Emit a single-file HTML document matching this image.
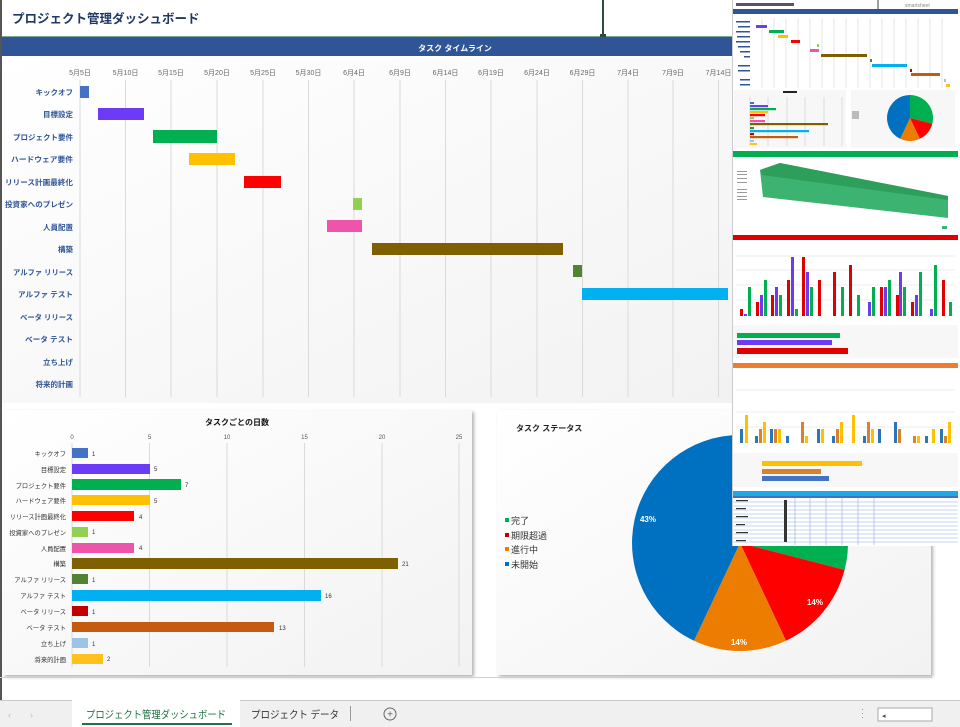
<!DOCTYPE html>
<html><head><meta charset="utf-8">
<style>
html,body{margin:0;padding:0;width:960px;height:727px;overflow:hidden;background:#fff;}
svg{display:block;font-family:"Liberation Sans","Noto Sans CJK JP",sans-serif;}
</style></head><body>
<svg width="960" height="727" viewBox="0 0 960 727" xmlns="http://www.w3.org/2000/svg">
<defs>
<linearGradient id="bg" x1="0" y1="0" x2="1" y2="1"><stop offset="0" stop-color="#ffffff"/><stop offset="1" stop-color="#f2f2f2"/></linearGradient>
<filter id="sh" x="-5%" y="-5%" width="110%" height="110%"><feDropShadow dx="2" dy="2" stdDeviation="1.5" flood-color="#000" flood-opacity="0.3"/></filter>
</defs>
<rect width="960" height="727" fill="#fff"/>
<rect x="0" y="0" width="2" height="700" fill="#555"/>
<text x="12" y="23" font-size="12.5" font-weight="bold" fill="#1F3864">プロジェクト管理ダッシュボード</text>
<rect x="2" y="36" width="731" height="1" fill="#7fa89a"/>
<rect x="602" y="0" width="2" height="37" fill="#2e4a3a"/>
<rect x="600" y="34" width="6" height="4" fill="#2e4a3a"/>
<rect x="2" y="37" width="731" height="19" fill="#2F5597"/>
<text x="455" y="51" font-size="8" font-weight="bold" fill="#fff" text-anchor="middle">タスク タイムライン</text>
<rect x="2" y="58" width="731" height="345" fill="url(#bg)"/>
<g stroke="#dadada" stroke-width="1">
<line x1="80" y1="80" x2="80" y2="397"/><line x1="125.5" y1="80" x2="125.5" y2="397"/><line x1="171" y1="80" x2="171" y2="397"/><line x1="217" y1="80" x2="217" y2="397"/><line x1="263" y1="80" x2="263" y2="397"/><line x1="308.5" y1="80" x2="308.5" y2="397"/><line x1="354" y1="80" x2="354" y2="397"/><line x1="400" y1="80" x2="400" y2="397"/><line x1="445.5" y1="80" x2="445.5" y2="397"/><line x1="491" y1="80" x2="491" y2="397"/><line x1="537" y1="80" x2="537" y2="397"/><line x1="582.5" y1="80" x2="582.5" y2="397"/><line x1="628" y1="80" x2="628" y2="397"/><line x1="673" y1="80" x2="673" y2="397"/><line x1="718.5" y1="80" x2="718.5" y2="397"/>
</g>
<g font-size="7" fill="#666" text-anchor="middle">
<text x="80" y="75">5月5日</text><text x="125.5" y="75">5月10日</text><text x="171" y="75">5月15日</text><text x="217" y="75">5月20日</text><text x="263" y="75">5月25日</text><text x="308.5" y="75">5月30日</text><text x="354" y="75">6月4日</text><text x="400" y="75">6月9日</text><text x="445.5" y="75">6月14日</text><text x="491" y="75">6月19日</text><text x="537" y="75">6月24日</text><text x="582.5" y="75">6月29日</text><text x="628" y="75">7月4日</text><text x="673" y="75">7月9日</text><text x="718.5" y="75">7月14日</text>
</g>
<g font-size="7.5" font-weight="bold" fill="#2F5597" text-anchor="end">
<text x="73" y="95">キックオフ</text><text x="73" y="117">目標設定</text><text x="73" y="140" textLength="60" lengthAdjust="spacingAndGlyphs">プロジェクト要件</text><text x="73" y="162" textLength="62" lengthAdjust="spacingAndGlyphs">ハードウェア要件</text><text x="73" y="185" textLength="68" lengthAdjust="spacingAndGlyphs">リリース計画最終化</text><text x="73" y="207" textLength="68" lengthAdjust="spacingAndGlyphs">投資家へのプレゼン</text><text x="73" y="230">人員配置</text><text x="73" y="252">構築</text><text x="73" y="275" textLength="60" lengthAdjust="spacingAndGlyphs">アルファ リリース</text><text x="73" y="297" textLength="55" lengthAdjust="spacingAndGlyphs">アルファ テスト</text><text x="73" y="320" textLength="53" lengthAdjust="spacingAndGlyphs">ベータ リリース</text><text x="73" y="342" textLength="48" lengthAdjust="spacingAndGlyphs">ベータ テスト</text><text x="73" y="365">立ち上げ</text><text x="73" y="387">将来的計画</text>
</g>
<rect x="80" y="86" width="9" height="12" fill="#4472C4"/>
<rect x="98" y="108" width="46" height="12" fill="#6B3BF5"/>
<rect x="153" y="130" width="64" height="13" fill="#00B050"/>
<rect x="189" y="153" width="46" height="12" fill="#FFC000"/>
<rect x="244" y="176" width="37" height="12" fill="#FF0000"/>
<rect x="353" y="198" width="9" height="12" fill="#92D050"/>
<rect x="327" y="220" width="35" height="12" fill="#EE55AA"/>
<rect x="372" y="243" width="191" height="12" fill="#7F6000"/>
<rect x="573" y="265" width="9" height="12" fill="#548235"/>
<rect x="582" y="288" width="146" height="12" fill="#00B0F0"/>

<rect x="3" y="410" width="469" height="265" fill="url(#bg)" filter="url(#sh)"/>
<text x="237" y="425" font-size="8" font-weight="bold" fill="#111" text-anchor="middle">タスクごとの日数</text>
<g stroke="#dadada"><line x1="72" y1="443" x2="72" y2="667"/><line x1="149.5" y1="443" x2="149.5" y2="667"/><line x1="227" y1="443" x2="227" y2="667"/><line x1="304.5" y1="443" x2="304.5" y2="667"/><line x1="382" y1="443" x2="382" y2="667"/><line x1="459" y1="443" x2="459" y2="667"/></g>
<g font-size="6" fill="#555" text-anchor="middle"><text x="72" y="439">0</text><text x="149.5" y="439">5</text><text x="227" y="439">10</text><text x="304.5" y="439">15</text><text x="382" y="439">20</text><text x="459" y="439">25</text></g>
<g font-size="6.3" fill="#333" text-anchor="end">
<text x="66" y="456">キックオフ</text><text x="66" y="472">目標設定</text><text x="66" y="488">プロジェクト要件</text><text x="66" y="503">ハードウェア要件</text><text x="66" y="519">リリース計画最終化</text><text x="66" y="535">投資家へのプレゼン</text><text x="66" y="551">人員配置</text><text x="66" y="566">構築</text><text x="66" y="582">アルファ リリース</text><text x="66" y="598">アルファ テスト</text><text x="66" y="614">ベータ リリース</text><text x="66" y="630">ベータ テスト</text><text x="66" y="646">立ち上げ</text><text x="66" y="662">将来的計画</text>
</g>
<rect x="72" y="448" width="16" height="10" fill="#4472C4"/>
<rect x="72" y="464" width="78" height="10" fill="#6B3BF5"/>
<rect x="72" y="479" width="109" height="11" fill="#00B050"/>
<rect x="72" y="495" width="78" height="10" fill="#FFC000"/>
<rect x="72" y="511" width="62" height="10" fill="#FF0000"/>
<rect x="72" y="527" width="16" height="10" fill="#92D050"/>
<rect x="72" y="543" width="62" height="10" fill="#EE55AA"/>
<rect x="72" y="558" width="326" height="11" fill="#7F6000"/>
<rect x="72" y="574" width="16" height="10" fill="#548235"/>
<rect x="72" y="590" width="249" height="11" fill="#00B0F0"/>
<rect x="72" y="606" width="16" height="10" fill="#C00000"/>
<rect x="72" y="622" width="202" height="10" fill="#C55A11"/>
<rect x="72" y="638" width="16" height="10" fill="#9DC3E6"/>
<rect x="72" y="654" width="31" height="10" fill="#FFC020"/>
<g font-size="6" fill="#333"><text x="92" y="456">1</text><text x="154" y="471">5</text><text x="185" y="487">7</text><text x="154" y="503">5</text><text x="139" y="519">4</text><text x="92" y="534">1</text><text x="139" y="550">4</text><text x="402" y="566">21</text><text x="92" y="582">1</text><text x="325" y="598">16</text><text x="92" y="614">1</text><text x="279" y="630">13</text><text x="92" y="646">1</text><text x="107" y="661">2</text></g>

<rect x="497" y="410" width="434" height="265" fill="url(#bg)" filter="url(#sh)"/>
<text x="516" y="431" font-size="8" font-weight="bold" fill="#222">タスク ステータス</text>
<path d="M740,543 L740,435 A108,108 0 0 1 844.6,569.9 Z" fill="#00B050"/>
<path d="M740,543 L844.6,569.9 A108,108 0 0 1 786,640.7 Z" fill="#FF0000"/>
<path d="M740,543 L786,640.7 A108,108 0 0 1 694,640.7 Z" fill="#ED7D00"/>
<path d="M740,543 L694,640.7 A108,108 0 0 1 740,435 Z" fill="#0070C0"/>
<g font-size="8" font-weight="bold" fill="#fff" text-anchor="middle"><text x="648" y="522">43%</text><text x="815" y="605">14%</text><text x="739" y="645">14%</text></g>
<g font-size="9" fill="#333">
<rect x="505" y="518" width="4" height="4" fill="#00B050"/><text x="511" y="524">完了</text>
<rect x="505" y="533" width="4" height="4" fill="#C00000"/><text x="511" y="539">期限超過</text>
<rect x="505" y="547" width="4" height="4" fill="#ED7D00"/><text x="511" y="553">進行中</text>
<rect x="505" y="562" width="4" height="4" fill="#0070C0"/><text x="511" y="568">未開始</text>
</g>

<g>
<rect x="732" y="0" width="228" height="546" fill="#fff"/>
<rect x="732" y="0" width="1" height="546" fill="#ccc"/>
<rect x="736" y="3" width="58" height="3" fill="#556"/>
<line x1="878" y1="0" x2="878" y2="9" stroke="#2e4a3a"/>
<text x="905" y="7" font-size="5" fill="#888">smartsheet</text>
<rect x="733" y="9" width="225" height="5" fill="#2F5597"/>
<g stroke="#e4e4e4"><line x1="762" y1="18" x2="762" y2="88"/><line x1="774" y1="18" x2="774" y2="88"/><line x1="786" y1="18" x2="786" y2="88"/><line x1="798" y1="18" x2="798" y2="88"/><line x1="810" y1="18" x2="810" y2="88"/><line x1="822" y1="18" x2="822" y2="88"/><line x1="834" y1="18" x2="834" y2="88"/><line x1="846" y1="18" x2="846" y2="88"/><line x1="858" y1="18" x2="858" y2="88"/><line x1="870" y1="18" x2="870" y2="88"/><line x1="882" y1="18" x2="882" y2="88"/><line x1="894" y1="18" x2="894" y2="88"/><line x1="906" y1="18" x2="906" y2="88"/><line x1="918" y1="18" x2="918" y2="88"/><line x1="930" y1="18" x2="930" y2="88"/><line x1="942" y1="18" x2="942" y2="88"/></g>
<g fill="#2F5597"><rect x="736" y="21" width="14" height="1.5"/><rect x="738" y="26" width="12" height="1.5"/><rect x="736" y="31" width="14" height="1.5"/><rect x="737" y="36" width="13" height="1.5"/><rect x="736" y="41" width="14" height="1.5"/><rect x="738" y="46" width="12" height="1.5"/><rect x="740" y="51" width="10" height="1.5"/><rect x="744" y="56" width="6" height="1.5"/><rect x="738" y="65" width="12" height="1.5"/><rect x="738" y="70" width="12" height="1.5"/><rect x="740" y="79" width="10" height="1.5"/><rect x="740" y="84" width="10" height="1.5"/></g>
<rect x="756" y="25" width="11" height="3" fill="#6B3BF5"/>
<rect x="769" y="30" width="15" height="3" fill="#00B050"/>
<rect x="778" y="35" width="10" height="3" fill="#FFC000"/>
<rect x="791" y="40" width="9" height="3" fill="#FF0000"/>
<rect x="817" y="44" width="2" height="3" fill="#92D050"/>
<rect x="810" y="49" width="9" height="3" fill="#EE55AA"/>
<rect x="821" y="54" width="46" height="3" fill="#7F6000"/>
<rect x="870" y="59" width="2" height="3" fill="#548235"/>
<rect x="872" y="64" width="35" height="3" fill="#00B0F0"/>
<rect x="910" y="69" width="2" height="3" fill="#C00000"/>
<rect x="911" y="73" width="29" height="3" fill="#C55A11"/>
<rect x="944" y="79" width="2" height="3" fill="#9DC3E6"/>
<rect x="946" y="84" width="4" height="3" fill="#FFC020"/>
<rect x="734" y="90" width="112" height="58" fill="#f7f7f7"/>
<rect x="783" y="91" width="14" height="2" fill="#222"/>
<g stroke="#ddd"><line x1="750" y1="97" x2="750" y2="146"/><line x1="768" y1="97" x2="768" y2="146"/><line x1="787" y1="97" x2="787" y2="146"/><line x1="805" y1="97" x2="805" y2="146"/><line x1="824" y1="97" x2="824" y2="146"/><line x1="842" y1="97" x2="842" y2="146"/></g>
<rect x="750" y="102" width="4" height="2" fill="#4472C4"/><rect x="750" y="105" width="18" height="2.2" fill="#6B3BF5"/><rect x="750" y="108" width="26" height="2.2" fill="#00B050"/><rect x="750" y="111" width="18" height="2.2" fill="#FFC000"/><rect x="750" y="114" width="15" height="2.2" fill="#FF0000"/><rect x="750" y="117" width="4" height="2.2" fill="#92D050"/><rect x="750" y="120" width="15" height="2.2" fill="#EE55AA"/><rect x="750" y="123" width="78" height="2.2" fill="#7F6000"/><rect x="750" y="127" width="4" height="2.2" fill="#548235"/><rect x="750" y="130" width="59" height="2.2" fill="#00B0F0"/><rect x="750" y="133" width="4" height="2.2" fill="#C00000"/><rect x="750" y="136" width="48" height="2.2" fill="#C55A11"/><rect x="750" y="140" width="4" height="2" fill="#9DC3E6"/><rect x="750" y="143" width="7" height="2" fill="#FFC020"/>
<rect x="851" y="90" width="104" height="58" fill="#f7f7f7"/>
<path d="M910,118 L910,95 A23,23 0 0 1 932.3,123.7 Z" fill="#00B050"/>
<path d="M910,118 L932.3,123.7 A23,23 0 0 1 919.8,138.8 Z" fill="#FF0000"/>
<path d="M910,118 L919.8,138.8 A23,23 0 0 1 900.2,138.8 Z" fill="#ED7D00"/>
<path d="M910,118 L900.2,138.8 A23,23 0 0 1 910,95 Z" fill="#0070C0"/>
<rect x="852" y="111" width="7" height="8" fill="#bbb"/>
<rect x="733" y="151" width="225" height="6" fill="#00B050"/>
<polygon points="760,170 780,163 948,196 948,218 763,197" fill="#3CB371"/>
<polygon points="760,170 780,163 948,196 948,200 762,175" fill="#2E9E5B"/>
<g fill="#999"><rect x="737" y="171" width="10" height="1"/><rect x="737" y="174" width="10" height="1"/><rect x="737" y="178" width="10" height="1"/><rect x="737" y="182" width="10" height="1"/><rect x="737" y="189" width="10" height="1"/><rect x="737" y="192" width="10" height="1"/><rect x="737" y="196" width="10" height="1"/><rect x="737" y="199" width="10" height="1"/></g>
<rect x="942" y="226" width="5" height="3" fill="#3CB371"/>
<rect x="733" y="235" width="225" height="5" fill="#E00000"/>
<g stroke="#eee"><line x1="736" y1="256" x2="955" y2="256"/><line x1="736" y1="270" x2="955" y2="270"/><line x1="736" y1="285" x2="955" y2="285"/><line x1="736" y1="300" x2="955" y2="300"/></g>
<g fill="#E00000"><rect x="740" y="309" width="3" height="7"/><rect x="756" y="302" width="3" height="14"/><rect x="771" y="295" width="3" height="21"/><rect x="787" y="280" width="3" height="36"/><rect x="802" y="257" width="3" height="59"/><rect x="818" y="280" width="3" height="36"/><rect x="833" y="272" width="3" height="44"/><rect x="849" y="265" width="3" height="51"/><rect x="880" y="287" width="3" height="29"/><rect x="896" y="295" width="3" height="21"/><rect x="911" y="302" width="3" height="14"/><rect x="942" y="280" width="3" height="36"/></g>
<g fill="#6B3BF5"><rect x="744" y="314" width="3" height="2"/><rect x="760" y="295" width="3" height="21"/><rect x="775" y="287" width="3" height="29"/><rect x="791" y="257" width="3" height="59"/><rect x="806" y="272" width="3" height="44"/><rect x="868" y="302" width="3" height="14"/><rect x="884" y="287" width="3" height="29"/><rect x="899" y="272" width="3" height="44"/><rect x="915" y="295" width="3" height="21"/><rect x="930" y="309" width="3" height="7"/></g>
<g fill="#00B050"><rect x="748" y="287" width="3" height="29"/><rect x="764" y="280" width="3" height="36"/><rect x="779" y="295" width="3" height="21"/><rect x="795" y="309" width="3" height="7"/><rect x="810" y="287" width="3" height="29"/><rect x="841" y="287" width="3" height="29"/><rect x="857" y="295" width="3" height="21"/><rect x="872" y="287" width="3" height="29"/><rect x="888" y="280" width="3" height="36"/><rect x="903" y="287" width="3" height="29"/><rect x="919" y="272" width="3" height="44"/><rect x="934" y="265" width="3" height="51"/><rect x="949" y="302" width="3" height="14"/></g>
<rect x="733" y="325" width="225" height="33" fill="#f7f7f7"/>
<rect x="737" y="333" width="103" height="5" fill="#00B050"/>
<rect x="737" y="340" width="95" height="5" fill="#6B3BF5"/>
<rect x="737" y="348" width="111" height="6" fill="#E00000"/>
<rect x="733" y="363" width="225" height="5" fill="#ED7D31"/>
<g stroke="#eee"><line x1="736" y1="390" x2="955" y2="390"/><line x1="736" y1="412" x2="955" y2="412"/><line x1="736" y1="427" x2="955" y2="427"/></g>
<g fill="#2E75B6"><rect x="740" y="429" width="3" height="14"/><rect x="755" y="436" width="3" height="7"/><rect x="770" y="429" width="3" height="14"/><rect x="786" y="436" width="3" height="7"/><rect x="817" y="429" width="3" height="14"/><rect x="832" y="436" width="3" height="7"/><rect x="863" y="436" width="3" height="7"/><rect x="878" y="429" width="3" height="14"/><rect x="894" y="422" width="3" height="21"/><rect x="925" y="436" width="3" height="7"/><rect x="940" y="429" width="3" height="14"/></g>
<g fill="#D9822B"><rect x="759" y="429" width="3" height="14"/><rect x="774" y="429" width="3" height="14"/><rect x="801" y="422" width="3" height="21"/><rect x="836" y="429" width="3" height="14"/><rect x="867" y="422" width="3" height="21"/><rect x="898" y="429" width="3" height="14"/><rect x="913" y="436" width="3" height="7"/><rect x="944" y="436" width="3" height="7"/></g>
<g fill="#FFC000"><rect x="745" y="415" width="3" height="28"/><rect x="763" y="422" width="3" height="21"/><rect x="778" y="429" width="3" height="14"/><rect x="805" y="436" width="3" height="7"/><rect x="821" y="429" width="3" height="14"/><rect x="840" y="422" width="3" height="21"/><rect x="852" y="415" width="3" height="28"/><rect x="871" y="429" width="3" height="14"/><rect x="917" y="436" width="3" height="7"/><rect x="932" y="429" width="3" height="14"/><rect x="948" y="422" width="3" height="21"/></g>
<rect x="733" y="453" width="225" height="34" fill="#f7f7f7"/>
<rect x="762" y="461" width="100" height="5" fill="#FFC000"/>
<rect x="762" y="469" width="59" height="5" fill="#D9822B"/>
<rect x="762" y="476" width="67" height="5" fill="#4472C4"/>
<rect x="733" y="491" width="225" height="5" fill="#1CA9E6"/>
<rect x="733" y="496" width="225" height="2" fill="#4472C4"/>
<g stroke="#8EA9DB" stroke-width="0.6"><line x1="733" y1="502" x2="958" y2="502"/><line x1="733" y1="506" x2="958" y2="506"/><line x1="733" y1="510" x2="958" y2="510"/><line x1="733" y1="514" x2="958" y2="514"/><line x1="733" y1="518" x2="958" y2="518"/><line x1="733" y1="522" x2="958" y2="522"/><line x1="733" y1="526" x2="958" y2="526"/><line x1="733" y1="530" x2="958" y2="530"/><line x1="733" y1="534" x2="958" y2="534"/><line x1="733" y1="538" x2="958" y2="538"/><line x1="733" y1="542" x2="958" y2="542"/><line x1="795" y1="498" x2="795" y2="545"/><line x1="810" y1="498" x2="810" y2="545"/><line x1="826" y1="498" x2="826" y2="545"/><line x1="842" y1="498" x2="842" y2="545"/><line x1="858" y1="498" x2="858" y2="545"/><line x1="874" y1="498" x2="874" y2="545"/></g>
<g fill="#333"><rect x="736" y="500" width="12" height="1.2"/><rect x="736" y="508" width="10" height="1.2"/><rect x="736" y="516" width="12" height="1.2"/><rect x="736" y="524" width="9" height="1.2"/><rect x="736" y="532" width="12" height="1.2"/><rect x="736" y="540" width="10" height="1.2"/><rect x="784" y="500" width="3" height="42"/></g>
</g>

<rect x="0" y="677" width="932" height="1" fill="#d0d0d0"/>
<rect x="0" y="700" width="960" height="27" fill="#f0f0f0"/>
<rect x="0" y="700" width="960" height="1" fill="#c8c8c8"/>
<text x="8" y="718" font-size="9" fill="#bbb">‹</text><text x="30" y="718" font-size="9" fill="#bbb">›</text>
<rect x="72" y="700" width="168" height="27" fill="#fff"/>
<rect x="82" y="723" width="150" height="2" fill="#217346"/>
<text x="156" y="718" font-size="10.5" fill="#217346" text-anchor="middle" textLength="140" lengthAdjust="spacingAndGlyphs">プロジェクト管理ダッシュボード</text>
<text x="295" y="718" font-size="10.5" fill="#333" text-anchor="middle" textLength="88" lengthAdjust="spacingAndGlyphs">プロジェクト データ</text>
<rect x="350" y="706" width="1" height="15" fill="#999"/>
<circle cx="390" cy="714" r="6" fill="none" stroke="#666"/>
<text x="390" y="717.5" font-size="10" fill="#666" text-anchor="middle">+</text>
<g fill="#999"><rect x="862" y="709" width="1" height="1"/><rect x="862" y="713" width="1" height="1"/><rect x="862" y="717" width="1" height="1"/></g>
<rect x="878" y="708" width="54" height="13" fill="#fff" stroke="#aaa"/>
<text x="882" y="718" font-size="7" fill="#444">◂</text>
</svg>
</body></html>
